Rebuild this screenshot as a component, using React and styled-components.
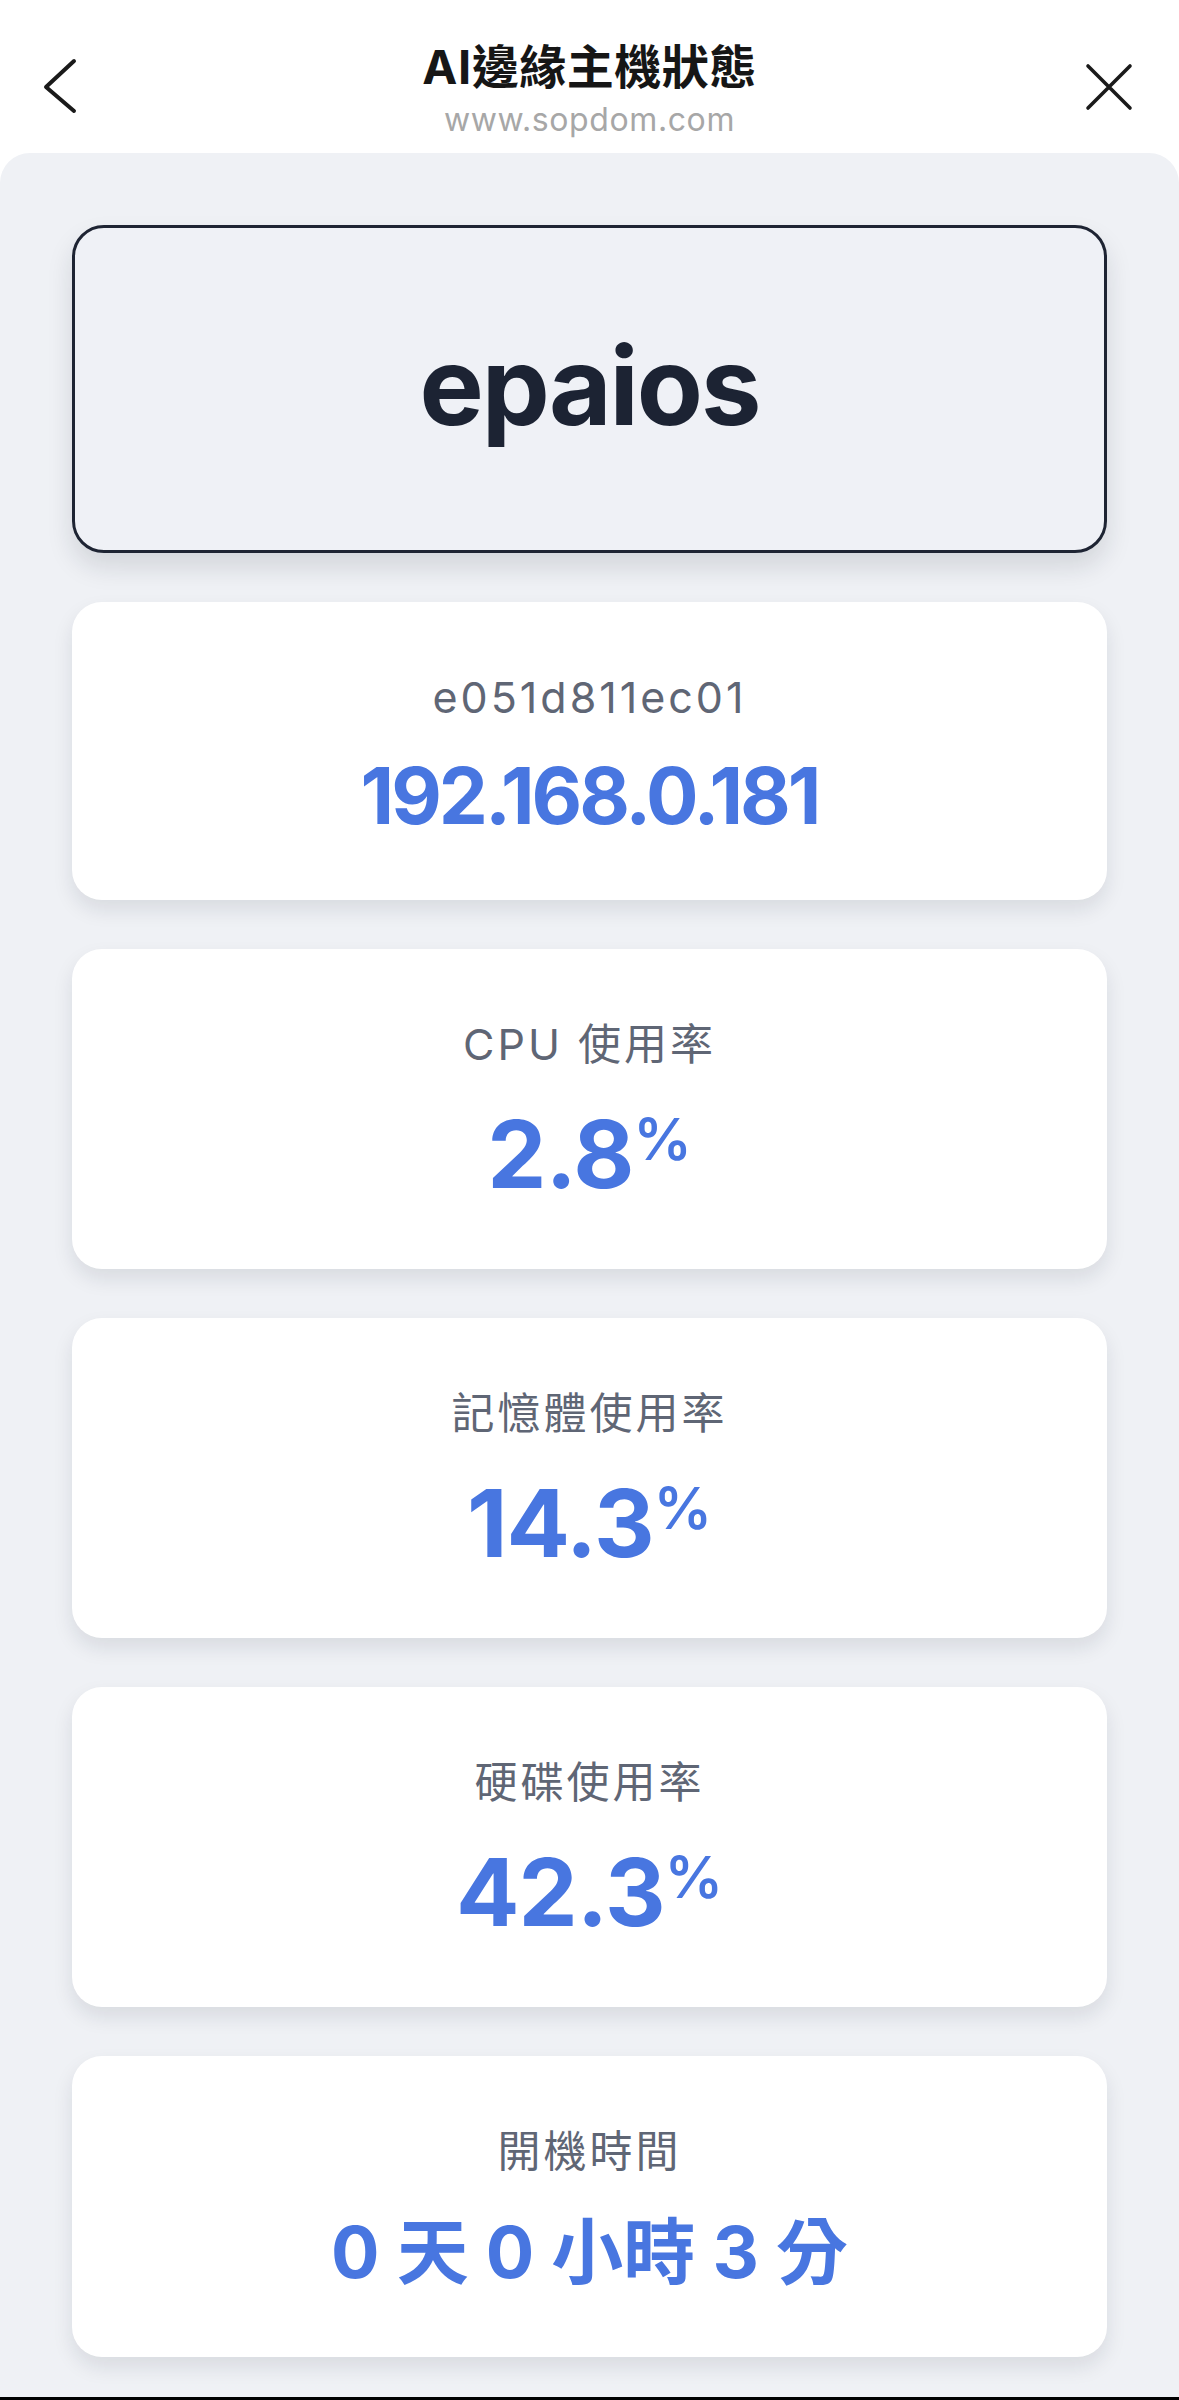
import React from 'react';
import styled, {createGlobalStyle} from "styled-components";

const GlobalStyle = createGlobalStyle`
    html, body{
        margin: 0;
        padding: 0;
        background: #ffffff;
    }
    body{
        font-family: "Inter", "Noto Sans CJK TC", sans-serif;
        -webkit-font-smoothing: antialiased;
    }
    *{
        box-sizing: border-box;
    }
`;

const stats = [
    {label: "CPU 使用率", value: "2.8"},
    {label: "記憶體使用率", value: "14.3"},
    {label: "硬碟使用率", value: "42.3"},
];

export default function App() {
  return (
    <>
      <GlobalStyle />
      <Page>
        <Header>
            <Side>
                <svg width="40" height="60" viewBox="0 0 40 60">
                    <path d="M34 5 L6 31 L34 55" fill="none" stroke="#1a1a1a" strokeWidth="4" strokeLinecap="round" strokeLinejoin="round" />
                </svg>
            </Side>
            <TitleBlock>
                <h1>AI邊緣主機狀態</h1>
                <span>www.sopdom.com</span>
            </TitleBlock>
            <Side $right>
                <svg width="50" height="50" viewBox="0 0 50 50">
                    <path d="M4 4 L46 46 M46 4 L4 46" fill="none" stroke="#1a1a1a" strokeWidth="3.6" strokeLinecap="round" />
                </svg>
            </Side>
        </Header>
        <Panel>
            <HostCard>epaios</HostCard>
            <InfoCard>
                <Label>e051d811ec01</Label>
                <Value $size={78} $height={94} $spacing={-3}>192.168.0.181</Value>
            </InfoCard>
            {
                stats.map((stat, index)=>{
                    return(
                        <InfoCard key={index}>
                            <Label>{stat.label}</Label>
                            <Value $size={94} $height={116} $spacing={-1}>
                                {stat.value}
                                <Percent>%</Percent>
                            </Value>
                        </InfoCard>
                    );
                })
            }
            <InfoCard>
                <Label>開機時間</Label>
                <Value $size={72} $height={97} $spacing={0}>0 天 0 小時 3 分</Value>
            </InfoCard>
        </Panel>
        <BottomBar />
      </Page>
    </>
  )
}

const Page = styled.div`
    width: 1179px;
    height: 2400px;
    display: flex;
    flex-direction: column;
    overflow: hidden;
    background: #ffffff;
`;

const Header = styled.header`
    height: 153px;
    flex-shrink: 0;
    display: grid;
    grid-template-columns: 160px 1fr 160px;
    background: #ffffff;
`;

const Side = styled.div`
    display: flex;
    justify-content: ${props => props.$right ? "flex-end" : "flex-start"};
    align-items: flex-start;
    padding: ${props => props.$right ? "62px 45px 0 0" : "56px 0 0 40px"};
`;

const TitleBlock = styled.div`
    display: flex;
    flex-direction: column;
    align-items: center;
    padding-top: 38px;
    h1{
        margin: 0;
        font-size: 47px;
        line-height: 58px;
        font-weight: 700;
        color: #161616;
        letter-spacing: 0.5px;
    }
    span{
        margin-top: 4px;
        font-size: 32px;
        line-height: 40px;
        color: #a7a7a7;
        letter-spacing: 0.6px;
    }
`;

const Panel = styled.main`
    flex: 1;
    min-height: 0;
    display: flex;
    flex-direction: column;
    gap: 49px;
    padding: 72px 72px 0;
    background: #eff1f5;
    border-radius: 30px 30px 0 0;
`;

const HostCard = styled.div`
    height: 328px;
    flex-shrink: 0;
    display: flex;
    align-items: center;
    justify-content: center;
    border: 3px solid #1e2433;
    border-radius: 32px;
    background: #eff1f6;
    box-shadow: 0 14px 26px rgba(20, 28, 45, 0.13);
    font-size: 108px;
    font-weight: 700;
    color: #1c2333;
    letter-spacing: -2px;
    padding-bottom: 8px;
`;

const InfoCard = styled.div`
    flex-shrink: 0;
    display: flex;
    flex-direction: column;
    align-items: center;
    gap: 22px;
    padding: 66px 24px 57px;
    background: #ffffff;
    border-radius: 30px;
    box-shadow: 0 10px 20px rgba(20, 28, 45, 0.1);
`;

const Label = styled.div`
    font-size: 43px;
    line-height: 59px;
    color: #5f6675;
    letter-spacing: 3px;
`;

const Value = styled.div`
    display: flex;
    align-items: flex-start;
    font-size: ${props => props.$size}px;
    line-height: ${props => props.$height}px;
    font-weight: 700;
    color: #4876e0;
    letter-spacing: ${props => props.$spacing}px;
`;

const Percent = styled.span`
    font-size: 58px;
    line-height: 1;
    font-weight: 600;
    margin: 14px 0 0 0;
    letter-spacing: 0;
`;

const BottomBar = styled.div`
    height: 3px;
    flex-shrink: 0;
    background: #000000;
`;
